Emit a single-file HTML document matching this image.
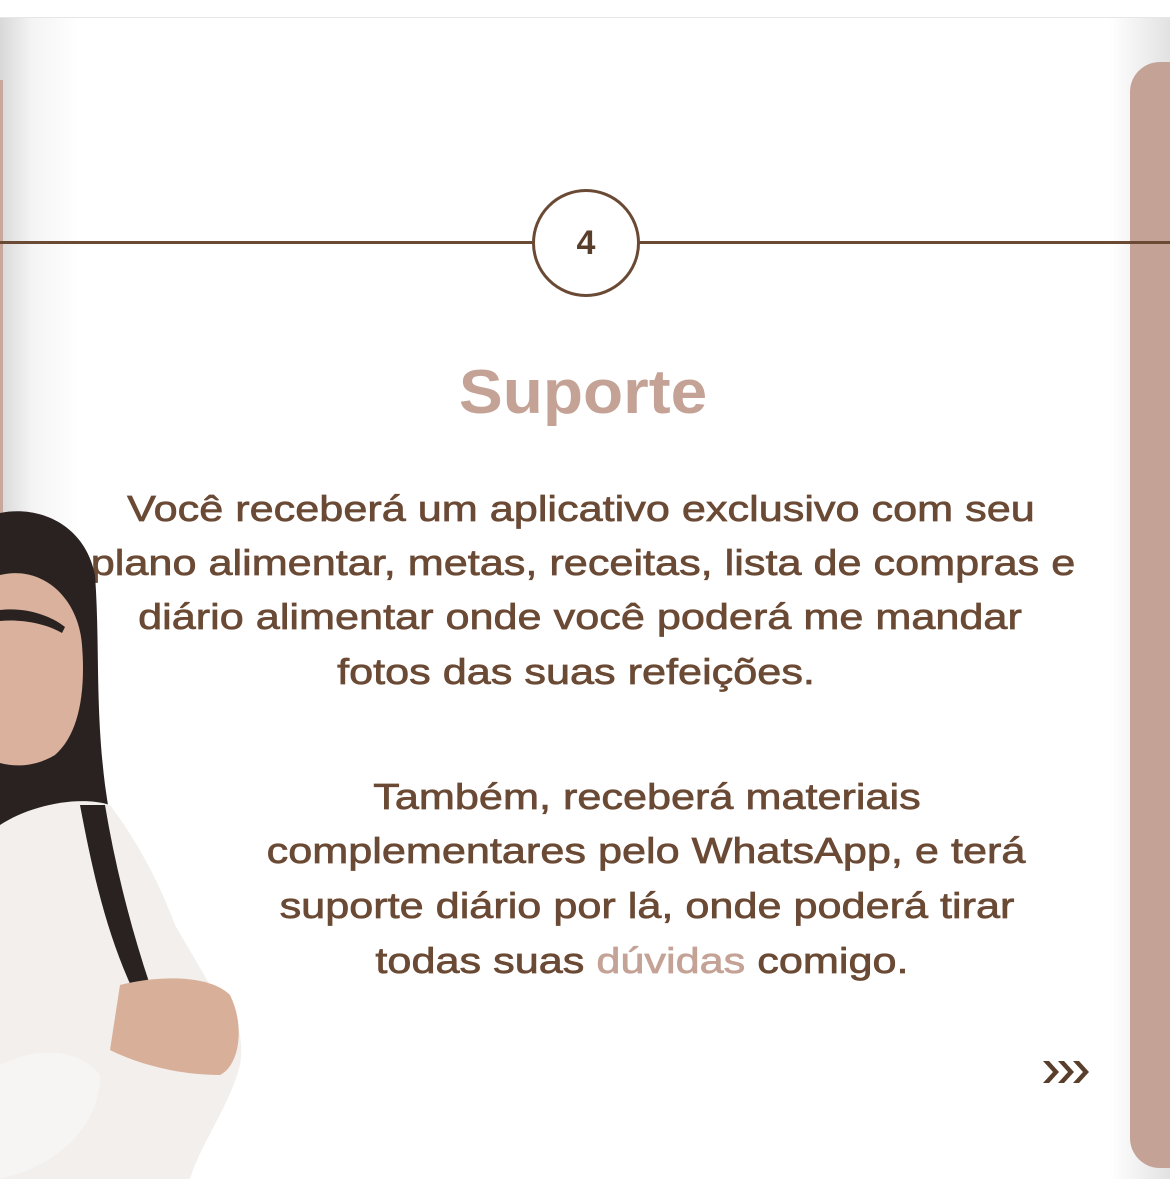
<!DOCTYPE html>
<html><head><meta charset="utf-8"><style>
html,body{margin:0;padding:0;width:1170px;height:1179px;overflow:hidden;background:#fff;position:relative;font-family:"Liberation Sans",sans-serif}
.top{position:absolute;left:0;top:0;width:1170px;height:17px;background:#fff;border-bottom:1px solid #e6e6e6}
.shadeL{position:absolute;left:0;top:18px;width:80px;height:1161px;background:linear-gradient(90deg,#d8d8d8,#f4f4f4 40%,#fff)}
.shadeR{position:absolute;right:0;top:18px;width:60px;height:1161px;background:linear-gradient(270deg,#e2e2e2,#fff)}
.strip{position:absolute;left:0;top:80px;width:3px;height:1100px;background:#c9a89c}
.panel{position:absolute;left:1130px;top:62px;width:60px;height:1106px;background:#c4a396;border-radius:30px 0 0 30px}
.line{position:absolute;left:0;top:241px;width:1170px;height:3px;background:#6b4a35}
.circle{position:absolute;left:532px;top:189px;width:102px;height:102px;border:3px solid #6b4a35;border-radius:50%;background:#fff;text-align:center;line-height:102px;font-weight:bold;font-size:34px;color:#5a3e2c}
.title{position:absolute;left:583px;top:357px;font-weight:bold;font-size:62px;color:#c4a396;white-space:nowrap;transform:translateX(-50%) scaleX(1.06)}
.t{position:absolute;white-space:nowrap;text-align:center;font-size:36px;color:#6b4a35;-webkit-text-stroke:0.7px #6b4a35;transform:translateX(-50%) scaleX(1.2)}
.pink{color:#c4a396;-webkit-text-stroke:0.7px #c4a396}
</style></head><body>
<div class="top"></div>
<div class="shadeL"></div>
<div class="shadeR"></div>
<div class="strip"></div>
<div class="panel"></div>
<div class="line"></div>
<div class="circle">4</div>
<div class="title">Suporte</div>
<div class="t" style="left:581px;top:488px">Você receberá um aplicativo exclusivo com seu</div>
<div class="t" style="left:583px;top:542px">plano alimentar, metas, receitas, lista de compras e</div>
<div class="t" style="left:580px;top:596px">diário alimentar onde você poderá me mandar</div>
<div class="t" style="left:576px;top:651px">fotos das suas refeições.</div>
<div class="t" style="left:647px;top:776px">Também, receberá materiais</div>
<div class="t" style="left:646px;top:830px">complementares pelo WhatsApp, e terá</div>
<div class="t" style="left:647px;top:885px">suporte diário por lá, onde poderá tirar</div>
<div class="t" style="left:642px;top:940px">todas suas <span class="pink">dúvidas</span> comigo.</div>
<svg style="position:absolute;left:1040px;top:1058px" width="50" height="28" viewBox="0 0 50 28">
<g fill="#5a3e2c"><path d="M3 3h6l10 11-10 11H3l10-11z"/><path d="M18 3h6l10 11-10 11h-6l10-11z"/><path d="M33 3h6l10 11-10 11h-6l10-11z"/></g></svg>
<svg style="position:absolute;left:0;top:505px" width="250" height="674" viewBox="0 0 250 674">
<path d="M0 8 C40 0 85 20 95 70 C100 140 95 200 105 280 C115 350 130 420 140 520 L150 674 L0 674Z" fill="#2a2220"/>
<path d="M0 70 C40 60 78 90 82 140 C86 190 78 230 55 250 C35 262 15 262 0 258Z" fill="#d9b19c"/>
<path d="M0 105 C25 102 50 110 65 122 L62 128 C45 118 20 114 0 116Z" fill="#2a2220"/>
<path d="M0 320 C30 300 80 290 110 300 C140 340 160 380 175 420 L210 480 C235 500 245 530 240 560 C230 600 200 640 190 674 L0 674Z" fill="#f2efec"/>
<path d="M80 300 C95 380 110 440 140 500 L150 480 C130 420 115 360 105 300Z" fill="#2a2220"/>
<path d="M120 480 C160 470 210 470 230 490 C245 520 240 560 220 570 C180 570 140 560 110 545Z" fill="#d8b09a"/>
<path d="M0 560 C40 540 80 545 100 570 C100 620 60 660 0 674Z" fill="#f7f5f3"/>
</svg>
</body></html>
